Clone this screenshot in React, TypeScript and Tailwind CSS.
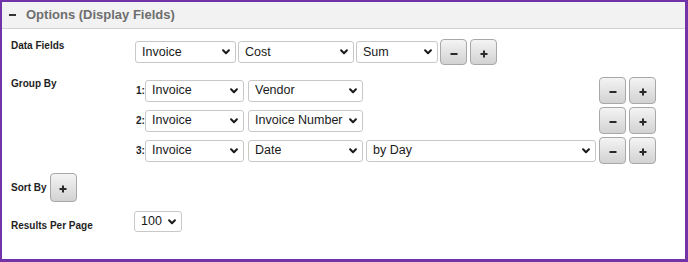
import clsx from "clsx";

function Chevron() {
  return (
    <svg width="8" height="6" viewBox="0 0 8 6" className="shrink-0">
      <path d="M1.1 1.3l2.9 2.9 2.9-2.9" fill="none" stroke="#1a1a1a" strokeWidth="2" strokeLinecap="round" strokeLinejoin="round" />
    </svg>
  );
}

function Select({ value, className }: { value: string; className: string }) {
  return (
    <div
      className={clsx(
        "flex items-center justify-between pl-[6px] pr-[5px] bg-white border border-[#c8c8c8] rounded-[3px] text-[12.5px] leading-none text-[#1a1a1a] shrink-0",
        className
      )}
    >
      <span className="whitespace-nowrap overflow-hidden">{value}</span>
      <Chevron />
    </div>
  );
}

function PmButton({ kind, className }: { kind: "plus" | "minus"; className: string }) {
  return (
    <button
      className={clsx(
        "w-[27px] flex items-center justify-center rounded-[4px] border border-[#a8a8a8] bg-linear-to-b from-[#f4f4f4] to-[#d2d2d2] shrink-0",
        className
      )}
    >
      <svg width="8" height="8" viewBox="0 0 8 8" className="mt-[3px]">
        <path d={kind === "plus" ? "M4 0.5v7M0.5 4h7" : "M0.5 4h7"} stroke="#2a2a2a" strokeWidth="2" />
      </svg>
    </button>
  );
}

const groupRows = [
  { n: "1:", field: "Vendor", extra: "" },
  { n: "2:", field: "Invoice Number", extra: "" },
  { n: "3:", field: "Date", extra: "by Day" },
];

export default function App() {
  return (
    <div className="w-[688px] h-[262px] bg-white border-t-2 border-l-2 border-r-[3px] border-b-[3px] border-[#7232a8] flex flex-col font-['Liberation_Sans',Arial,sans-serif]">
      <div className="h-[27px] shrink-0 bg-[#f2f2f2] border-b border-[#d2d2d2] flex items-center pl-[7px]">
        <span className="w-[7px] h-[2px] bg-[#333]" />
        <span className="ml-[10px] text-[13px] font-bold text-[#6e6e6e]">Options (Display Fields)</span>
      </div>

      <div className="flex flex-col pl-[9px] pt-[10px] text-[#1e1e1e]">
        <div className="flex items-start h-[26px]">
          <div className="w-[124px] text-[10px] leading-[12px] font-bold pt-[1px]">Data Fields</div>
          <div className="flex items-center h-[26px] gap-[2px]">
            <Select value="Invoice" className="w-[101px] h-[22px]" />
            <Select value="Cost" className="w-[116px] h-[22px]" />
            <Select value="Sum" className="w-[82px] h-[22px]" />
            <div className="flex gap-[3px]">
              <PmButton kind="minus" className="h-[26px]" />
              <PmButton kind="plus" className="h-[26px]" />
            </div>
          </div>
        </div>

        <div className="flex items-start mt-[12px]">
          <div className="w-[124px] text-[10px] leading-[12px] font-bold pt-[1px]">Group By</div>
          <div className="flex flex-col gap-[3px]">
            {groupRows.map((r) => (
              <div key={r.n} className="flex items-center h-[27px]">
                <span className="ml-[1px] w-[9px] shrink-0 whitespace-nowrap text-[10px] font-bold">{r.n}</span>
                <div className="w-[451px] flex items-center">
                  <Select value="Invoice" className="w-[99px] h-[22px]" />
                  <Select value={r.field} className="ml-[4px] w-[115px] h-[22px]" />
                  {r.extra && <Select value={r.extra} className="ml-[3px] w-[230px] h-[22px]" />}
                </div>
                <div className="ml-[3px] flex gap-[3px]">
                  <PmButton kind="minus" className="h-[27px]" />
                  <PmButton kind="plus" className="h-[27px]" />
                </div>
              </div>
            ))}
          </div>
        </div>

        <div className="flex items-center mt-[9px]">
          <span className="text-[10px] leading-[12px] font-bold">Sort By</span>
          <PmButton kind="plus" className="ml-[3px] h-[29px]" />
        </div>

        <div className="flex items-start mt-[9px]">
          <div className="w-[123px] text-[10px] leading-[12px] font-bold mt-[9px]">Results Per Page</div>
          <Select value="100" className="w-[48px] h-[21px]" />
        </div>
      </div>
    </div>
  );
}
